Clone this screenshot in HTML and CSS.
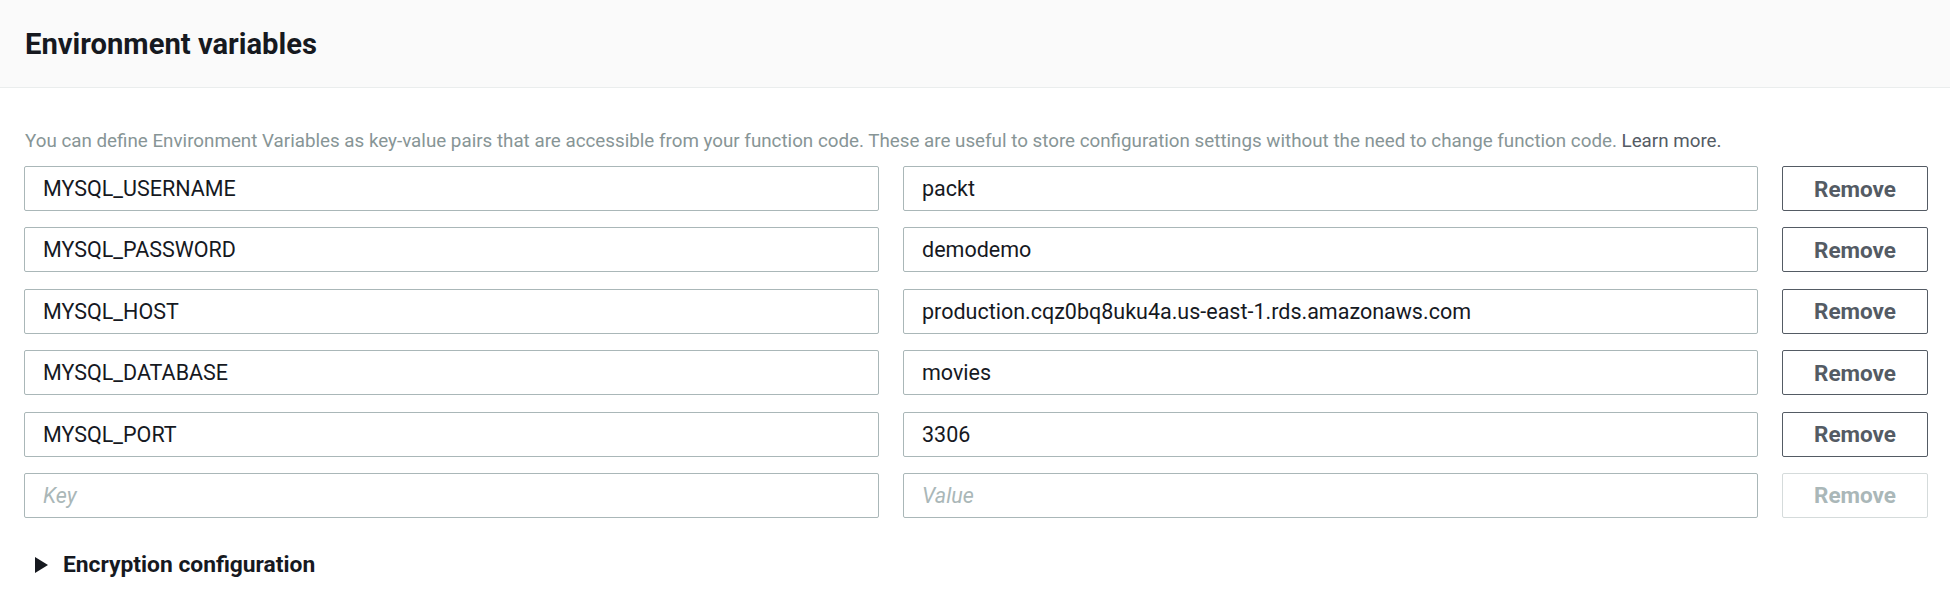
FILE: index.html
```html
<!DOCTYPE html>
<html lang="en">
<head>
<meta charset="utf-8">
<title>Environment variables</title>
<link rel="stylesheet" href="styles.css">
</head>
<body>
<section class="panel">
  <header class="panel-header">
    <h2 class="panel-title">Environment variables</h2>
  </header>
  <div class="panel-body">
    <p class="desc">You can define Environment Variables as key-value pairs that are accessible from your function code. These are useful to store configuration settings without the need to change function code. <a class="learn" href="#">Learn more.</a></p>
    <div class="vars">
      <input class="field" type="text" value="MYSQL_USERNAME">
      <input class="field" type="text" value="packt">
      <button class="btn" type="button">Remove</button>

      <input class="field" type="text" value="MYSQL_PASSWORD">
      <input class="field" type="text" value="demodemo">
      <button class="btn" type="button">Remove</button>

      <input class="field" type="text" value="MYSQL_HOST">
      <input class="field" type="text" value="production.cqz0bq8uku4a.us-east-1.rds.amazonaws.com">
      <button class="btn" type="button">Remove</button>

      <input class="field" type="text" value="MYSQL_DATABASE">
      <input class="field" type="text" value="movies">
      <button class="btn" type="button">Remove</button>

      <input class="field" type="text" value="MYSQL_PORT">
      <input class="field" type="text" value="3306">
      <button class="btn" type="button">Remove</button>

      <input class="field" type="text" placeholder="Key">
      <input class="field" type="text" placeholder="Value">
      <button class="btn btn-disabled" type="button" disabled>Remove</button>
    </div>
    <div class="expander">
      <span class="caret"></span>
      <span class="expander-label">Encryption configuration</span>
    </div>
  </div>
</section>
</body>
</html>
```

FILE: styles.css
```css
* { box-sizing: border-box; }
html, body { margin: 0; padding: 0; background: #ffffff; }
body {
  font-family: Roboto, "Open Sans", "Liberation Sans", sans-serif;
  color: #16191f;
  width: 1950px;
  height: 608px;
  overflow: hidden;
}
.panel-header {
  height: 88px;
  background: #fafafa;
  border-bottom: 1px solid #eaeded;
  display: flex;
  align-items: center;
  padding: 0 25px;
}
.panel-title {
  margin: 0;
  font-size: 29.2px;
  font-weight: 700;
  color: #16191f;
}
.panel-body {
  padding: 0 22px 0 24px;
}
.desc {
  margin: 42px 0 0 1px;
  font-size: 18.8px;
  line-height: 22px;
  color: #879596;
  white-space: nowrap;
}
.learn {
  color: #545b64;
  text-decoration: none;
}
.vars {
  margin-top: 14px;
  display: grid;
  grid-template-columns: 1fr 1fr 146px;
  column-gap: 24.5px;
  row-gap: 16.4px;
}
.field {
  height: 45px;
  border: 1px solid #aab7b8;
  border-radius: 2px;
  padding: 0 18px;
  font-family: inherit;
  font-size: 21.5px;
  color: #16191f;
  background: #fff;
  outline: none;
  min-width: 0;
}
.field::placeholder {
  color: #aab7b8;
  font-style: italic;
}
.btn {
  height: 45px;
  border: 1px solid #545b64;
  border-radius: 2px;
  background: #fff;
  color: #545b64;
  font-family: inherit;
  font-size: 22.5px;
  font-weight: 700;
  padding: 0;
}
.btn-disabled {
  border-color: #d5dbdb;
  color: #aab7b8;
}
.expander {
  margin-top: 35px;
  height: 24px;
  display: flex;
  align-items: center;
  padding-left: 11px;
}
.caret {
  width: 0;
  height: 0;
  border-top: 8px solid transparent;
  border-bottom: 8px solid transparent;
  border-left: 13px solid #16191f;
  margin-right: 15px;
}
.expander-label {
  font-size: 22.8px;
  line-height: 24px;
  font-weight: 700;
  color: #16191f;
}
```
